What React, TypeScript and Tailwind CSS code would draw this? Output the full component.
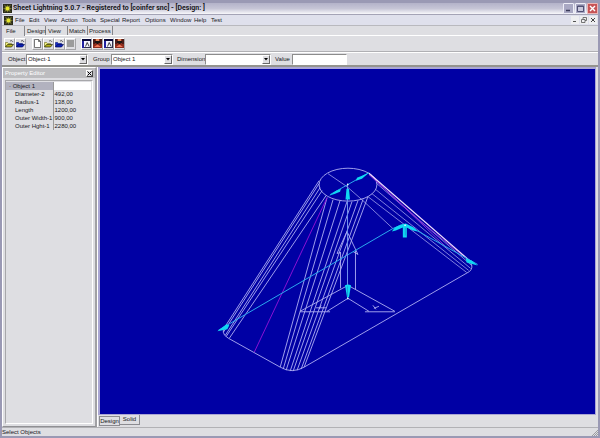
import React from "react";

const menus = [
  { label: "File", width: "w-[14px]" },
  { label: "Edit", width: "w-[15px]" },
  { label: "View", width: "w-[17px]" },
  { label: "Action", width: "w-[21px]" },
  { label: "Tools", width: "w-[18px]" },
  { label: "Special", width: "w-[22px]" },
  { label: "Report", width: "w-[23px]" },
  { label: "Options", width: "w-[25px]" },
  { label: "Window", width: "w-[24px]" },
  { label: "Help", width: "w-[17px]" },
  { label: "Test", width: "w-[16px]" },
];

const properties = [
  ["Diameter-2", "492,00"],
  ["Radius-1", "138,00"],
  ["Length", "1200,00"],
  ["Outer Width-1", "900,00"],
  ["Outer Hght-1", "2280,00"],
];

type IconName = "open" | "openBlue" | "new" | "gray" | "view" | "red";

function AppIcon() {
  return (
    <svg viewBox="0 0 8 8" className="size-[9px] shrink-0" aria-hidden="true">
      <rect width="8" height="8" fill="#29291c" />
      <path d="M1 0.5 3 2 4 0.7 5 2 7 0.5 6 3 8 4 6 5 7 7.5 5 6 4 7.5 3 6 1 7.5 2 5 0 4 2 3Z" fill="#77772f" />
      <circle cx="4" cy="4" r="1.7" fill="#e6e62a" />
    </svg>
  );
}

function ToolIcon({ name }: { name: IconName }) {
  return (
    <svg viewBox="0 0 9 9" className="size-[9px] shrink-0" aria-hidden="true">
      {name === "open" && (
        <>
          <path d="M0.5 8V3.5h2l1 1h3V6" fill="#efef80" stroke="#6a6a20" strokeWidth=".6" />
          <path d="M0.5 8 2.5 5.5h6L6.5 8Z" fill="#b5b41c" stroke="#28280a" strokeWidth=".7" />
          <path d="M5 2q2-1.2 3 .9" fill="none" stroke="#333" strokeWidth=".7" />
        </>
      )}
      {name === "openBlue" && (
        <>
          <path d="M0.5 8V3.5h2l1 1h3V6" fill="#1a2fc8" stroke="#0a1878" strokeWidth=".6" />
          <path d="M0.5 8 2.5 5.5h6L6.5 8Z" fill="#0a20b5" stroke="#040d60" strokeWidth=".7" />
          <path d="M5 2q2-1.2 3 .9" fill="none" stroke="#222" strokeWidth=".7" />
        </>
      )}
      {name === "new" && (
        <path d="M1.5 0.5h4l2 2v6h-6ZM5.5 0.5v2h2" fill="#fff" stroke="#444" strokeWidth=".7" />
      )}
      {name === "gray" && <rect x="1" y="1" width="7" height="7" fill="#9b9b9b" />}
      {name === "view" && (
        <>
          <rect x=".5" y=".5" width="8" height="8" fill="#f3f3ff" stroke="#30304c" />
          <path d="M0 1h9" stroke="#08083a" strokeWidth="2" />
          <path d="M1 2v7" stroke="#2020a0" strokeWidth="2" />
          <path d="m3.5 7.5 1.7-4 2 4" fill="none" stroke="#111" strokeWidth=".8" />
        </>
      )}
      {name === "red" && (
        <>
          <rect width="9" height="9" fill="#8c2c1c" />
          <path d="M0 0h2v5H0ZM7 0h2v5H7Z" fill="#4a1c18" />
          <path d="M3 0h3v2H3Z" fill="#e08a5c" />
          <path d="M2 2h5v2H5.500v1h-2V4H2Z" fill="#1c1414" />
          <path d="M1 8 4.500 5.500 8 8Z" fill="#f0785a" />
        </>
      )}
    </svg>
  );
}

function ToolButton({ name, label }: { name: IconName; label: string }) {
  return (
    <button
      type="button"
      aria-label={label}
      className="flex h-3 w-[11px] items-center justify-center border border-t-white border-l-white border-r-[#a5a5a8] border-b-[#a5a5a8] bg-[#dedee2]"
    >
      <ToolIcon name={name} />
    </button>
  );
}

function Combo({ id, label, value, labelWidth, width }: { id: string; label: string; value: string; labelWidth: string; width: string }) {
  return (
    <div className="flex items-center">
      <label htmlFor={id} className={labelWidth}>{label}</label>
      <div className={"relative h-[11px] border border-t-[#8c8c8c] border-l-[#8c8c8c] border-r-white border-b-white bg-white " + width}>
        <select id={id} className="block h-[9px] w-full appearance-none bg-white pl-px text-[6px] leading-[9px] outline-none">
          <option>{value}</option>
        </select>
        <span className="pointer-events-none absolute top-0 right-0 flex h-[9px] w-2 items-center justify-center border border-t-white border-l-white border-r-[#666] border-b-[#666] bg-[#dedee2]">
          <svg viewBox="0 0 4 3" className="h-[3px] w-1"><path d="M0 0h4L2 2.5Z" fill="#000" /></svg>
        </span>
      </div>
    </div>
  );
}

function TitleBar() {
  return (
    <header className="flex h-[11px] shrink-0 items-center bg-linear-to-b from-[#b3b2c9] via-[#c6c5d6] to-[#f8f8fb] pl-px">
      <AppIcon />
      <h1 className="ml-px flex-1 font-[Roboto,'Liberation_Sans',sans-serif] text-[7px] leading-[11px] font-bold whitespace-pre">
        Sheet Lightning 5.0.7 - Registered to [coinfer snc] - [Design: ]
      </h1>
      <div className="flex gap-px">
        <button type="button" aria-label="Minimize" className="size-[11px] rounded-[1px] border border-[#eeeef8] bg-[#a9a8c3]">
          <svg viewBox="0 0 9 9" className="size-[9px]"><path d="M2 6.5h4" stroke="#383858" strokeWidth="1.5" /></svg>
        </button>
        <button type="button" aria-label="Maximize" className="size-[11px] rounded-[1px] border border-[#eeeef8] bg-[#a9a8c3]">
          <svg viewBox="0 0 9 9" className="size-[9px]"><path d="M1.5 2H7.5V7.5H1.5ZM1.5 2.5h6" fill="#c9c8dc" stroke="#505074" /></svg>
        </button>
        <button type="button" aria-label="Close" className="size-[11px] rounded-[1px] border border-[#eeb5b5] bg-[#c75356]">
          <svg viewBox="0 0 9 9" className="size-[9px]"><path d="m2 2 5 5m0-5L2 7" stroke="#fff" strokeWidth="1.4" /></svg>
        </button>
      </div>
    </header>
  );
}

function MenuBar() {
  return (
    <nav className="flex h-[11px] shrink-0 items-center border-t border-[#a4a3b6] bg-[#dfe0ec] pl-[2px]">
      <AppIcon />
      <div className="ml-[2px] flex flex-1">
        {menus.map((m) => (
          <button type="button" key={m.label} className={"text-left leading-[10px] " + m.width}>{m.label}</button>
        ))}
      </div>
      <div className="flex gap-px pr-px">
        <button type="button" aria-label="Minimize design" className="size-2 bg-[#eeeef0]">
          <svg viewBox="0 0 8 8"><path d="M2 5.5h3" stroke="#555" /></svg>
        </button>
        <button type="button" aria-label="Restore design" className="size-2 bg-[#eeeef0]">
          <svg viewBox="0 0 8 8"><path d="M3 3V1.5h3.5v3H5M1.5 3.5H5v3H1.5Z" fill="none" stroke="#555" strokeWidth=".8" /></svg>
        </button>
        <button type="button" aria-label="Close design" className="size-2 bg-[#eeeef0]">
          <svg viewBox="0 0 8 8"><path d="m2 2 4 4m0-4L2 6" stroke="#444" /></svg>
        </button>
      </div>
    </nav>
  );
}

function PageTabs() {
  const inactive = "h-[9px] border-r border-[#85858a] text-left leading-[10px]";
  return (
    <div role="tablist" className="flex h-[11px] shrink-0 items-end border-t border-[#b9b9be]">
      <button role="tab" aria-selected="true" className="h-[10px] w-[23px] border-r border-[#85858a] pl-1 text-left leading-[10px]">File</button>
      <div className="flex flex-1 border-b border-white">
        <button role="tab" className={inactive + " w-[21px] pl-[2px]"}>Design</button>
        <button role="tab" className={inactive + " w-[22px] pl-[2px]"}>View</button>
        <button role="tab" className={inactive + " w-[20px] pl-px"}>Match</button>
        <button role="tab" className={inactive + " w-[25px] pl-px"}>Process</button>
      </div>
    </div>
  );
}

function PropertyEditor() {
  return (
    <aside className="flex w-[95px] shrink-0 flex-col border-t border-r-2 border-b border-l border-t-white border-l-white border-r-[#a0a0a4] border-b-[#909094] bg-[#dedee2]">
      <div className="flex h-[10px] shrink-0 items-center bg-[#bcbcbf] pr-[2px] pl-[2px] text-white">
        <h2 className="flex-1 leading-[9px]">Property Editor</h2>
        <button type="button" aria-label="Close property editor" className="size-[7px] border border-t-white border-l-white border-r-[#444] border-b-[#444] bg-[#dedee2]">
          <svg viewBox="0 0 5 5" className="size-[5px]"><path d="m0.5 0.5 4 4m0-4-4 4" stroke="#000" /></svg>
        </button>
      </div>
      <div className="m-[2px] flex-1 border border-t-[#a7a7aa] border-l-[#a7a7aa] border-r-white border-b-white pt-px pr-px">
        <table className="w-full table-fixed border-collapse">
          <colgroup><col className="w-[47px]" /><col /></colgroup>
          <tbody>
            <tr className="h-[8px]">
              <th scope="row" className="border-r border-[#999] bg-[#b2b2bf] pl-[3px] text-left leading-[8px] font-normal">· Object 1</th>
              <td className="bg-white" />
            </tr>
            {properties.map(([name, value]) => (
              <tr key={name} className="h-[8px]">
                <th scope="row" className="border-r border-[#999] pl-[9px] text-left leading-[8px] font-normal whitespace-nowrap">{name}</th>
                <td className="pl-px leading-[8px]">{value}</td>
              </tr>
            ))}
          </tbody>
        </table>
      </div>
    </aside>
  );
}

function Drawing() {
  return (
    <svg viewBox="100 69 495 346" preserveAspectRatio="xMidYMid meet" className="size-full" role="img" aria-label="Wireframe transition piece">
      <g fill="none" stroke="#b0b0f4" strokeWidth=".9">
        <ellipse cx="348" cy="185" rx="29" ry="16.5" />
        <path d="M319 181 223 330M319 184 223 333M320 188 225 336M322 191 226 337M326 196 229 339" />
        <path d="M327 198 280 368M333 200 283 370M340 201 286 371M347 202 290 372M352 202 293 372M358 201 297 371M363 200 301 370M368 197 304 368" />
        <path d="M223 329V333Q223 336 228 339L280 368Q292 375 304 368L470 272Q474 268 471 263" />
        <path d="M368 197 467 273M372 194 469 271M376 190 471 269M377 184 472 266" strokeOpacity=".8" />
        <path d="M328 174 347 187 363 201 393 229" strokeOpacity=".8" />
        <path d="M340.5 253V289M355.5 251V290M347 232 337 254 341 253M347 232 358 255 353 252" />
        <path d="M348 286 300 312M300 312.5H330M327 312 348 299 369 312M348 286 395 312M365 312.5H395" />
        <path d="M316 308.5H326M321 306 319 310M373 306 376 310M374 309 379 307" />
      </g>
      <path d="M327 198 254 353" stroke="#8a10d4" fill="none" />
      <path d="M369 175 421 222 468 260M370 175 448 249" stroke="#9234dc" strokeWidth=".9" fill="none" />
      <path d="M369 173.5 472 263" stroke="#f1dcff" strokeWidth="1.2" fill="none" />
      <path d="M218 331 393 229Q405 222 417 231L478 265M330 195 369 173" fill="none" stroke="#2aa8ee" />
      <path d="M347.5 184V299" stroke="#6f8fee" />
      <g fill="#10d8f2">
        <path d="m217 332 9-7 3 1-2 4ZM329 196l7-5 5-2-1 3-5 2ZM369 173l-7 6-6 2 1-3 5-2ZM345.500 200l1-11h2.500l1 11ZM345 286q3-2 6 0l-2 12h-2ZM478 266l-11-3-1-4 6 2ZM392 232l3-4 6-3 5-1 8 4 4 4-5-1-6-3v10h-4v-10l-7 3Z" />
      </g>
      <path d="M405.5 228V236M347.5 287V297" stroke="#149cd2" strokeWidth=".8" />
      <g fill="#e8f8ff"><path d="M347 184h1.5v1.5H347ZM347 298.5h1.5v1.5H347ZM404.5 225H406v1.5h-1.5Z" /></g>
    </svg>
  );
}

export default function App() {
  return (
    <div className="flex h-screen flex-col border-x-2 border-t-[3px] border-b-2 border-[#9a99b4] bg-[#dedee2] font-['Liberation_Sans',Arial,sans-serif] text-[6px] leading-[8px] text-[#18181c]">
      <TitleBar />
      <MenuBar />
      <PageTabs />
      <div role="toolbar" className="flex h-[16px] shrink-0 items-center border-b border-[#b0b0b4] pl-[2px]">
        <ToolButton name="open" label="Open" />
        <ToolButton name="openBlue" label="Open design" />
        <span className="w-[6px]" />
        <ToolButton name="new" label="New" />
        <ToolButton name="open" label="Open part" />
        <ToolButton name="openBlue" label="Open group" />
        <ToolButton name="gray" label="Save" />
        <span className="w-[5px]" />
        <ToolButton name="view" label="View" />
        <ToolButton name="red" label="Delete view" />
        <ToolButton name="view" label="View part" />
        <ToolButton name="red" label="Delete part" />
      </div>
      <div className="flex h-[15px] shrink-0 items-center border-t border-b-2 border-t-white border-b-[#94948f] pl-[6px]">
        <Combo id="object" label="Object" value="Object·1" labelWidth="w-[18px]" width="w-[62px]" />
        <span className="w-[5px]" />
        <Combo id="group" label="Group" value="Object 1" labelWidth="w-[18px]" width="w-[62px]" />
        <span className="w-[4px]" />
        <Combo id="dimension" label="Dimension" value="" labelWidth="w-[28px]" width="w-[66px]" />
        <label htmlFor="value" className="ml-[4px] w-[17px]">Value</label>
        <input id="value" className="h-[11px] w-[55px] border border-t-[#8c8c8c] border-l-[#8c8c8c] border-r-white border-b-white bg-white px-px outline-none" />
      </div>
      <main className="flex min-h-0 flex-1">
        <PropertyEditor />
        <section className="flex min-w-0 flex-1 flex-col border-l border-white pr-[2px]">
          <div className="min-h-0 flex-1 border-t-2 border-r border-b border-l-2 border-[#aaa6d4] bg-[#0000a4]">
            <Drawing />
          </div>
          <div role="tablist" className="flex h-[12px] shrink-0 items-start pl-px">
            <button role="tab" className="mt-px h-[10px] w-[21px] border border-[#8b8b91] text-center leading-[8px]"><span className="-mx-px">Design</span></button>
            <button role="tab" aria-selected="true" className="h-[10px] w-[20px] border-r border-b border-[#8b8b91] text-center leading-[9px]">Solid</button>
          </div>
        </section>
      </main>
      <footer className="flex h-[9px] shrink-0 items-end justify-between border-t border-[#b1b1b5] leading-[8px]">
        <span>Select Objects</span>
        <svg viewBox="0 0 7 7" className="size-[7px]" aria-hidden="true"><path d="M1 7 7 1M3 7l4-4M5 7l2-2" stroke="#8b8b91" strokeWidth=".8" /></svg>
      </footer>
    </div>
  );
}
